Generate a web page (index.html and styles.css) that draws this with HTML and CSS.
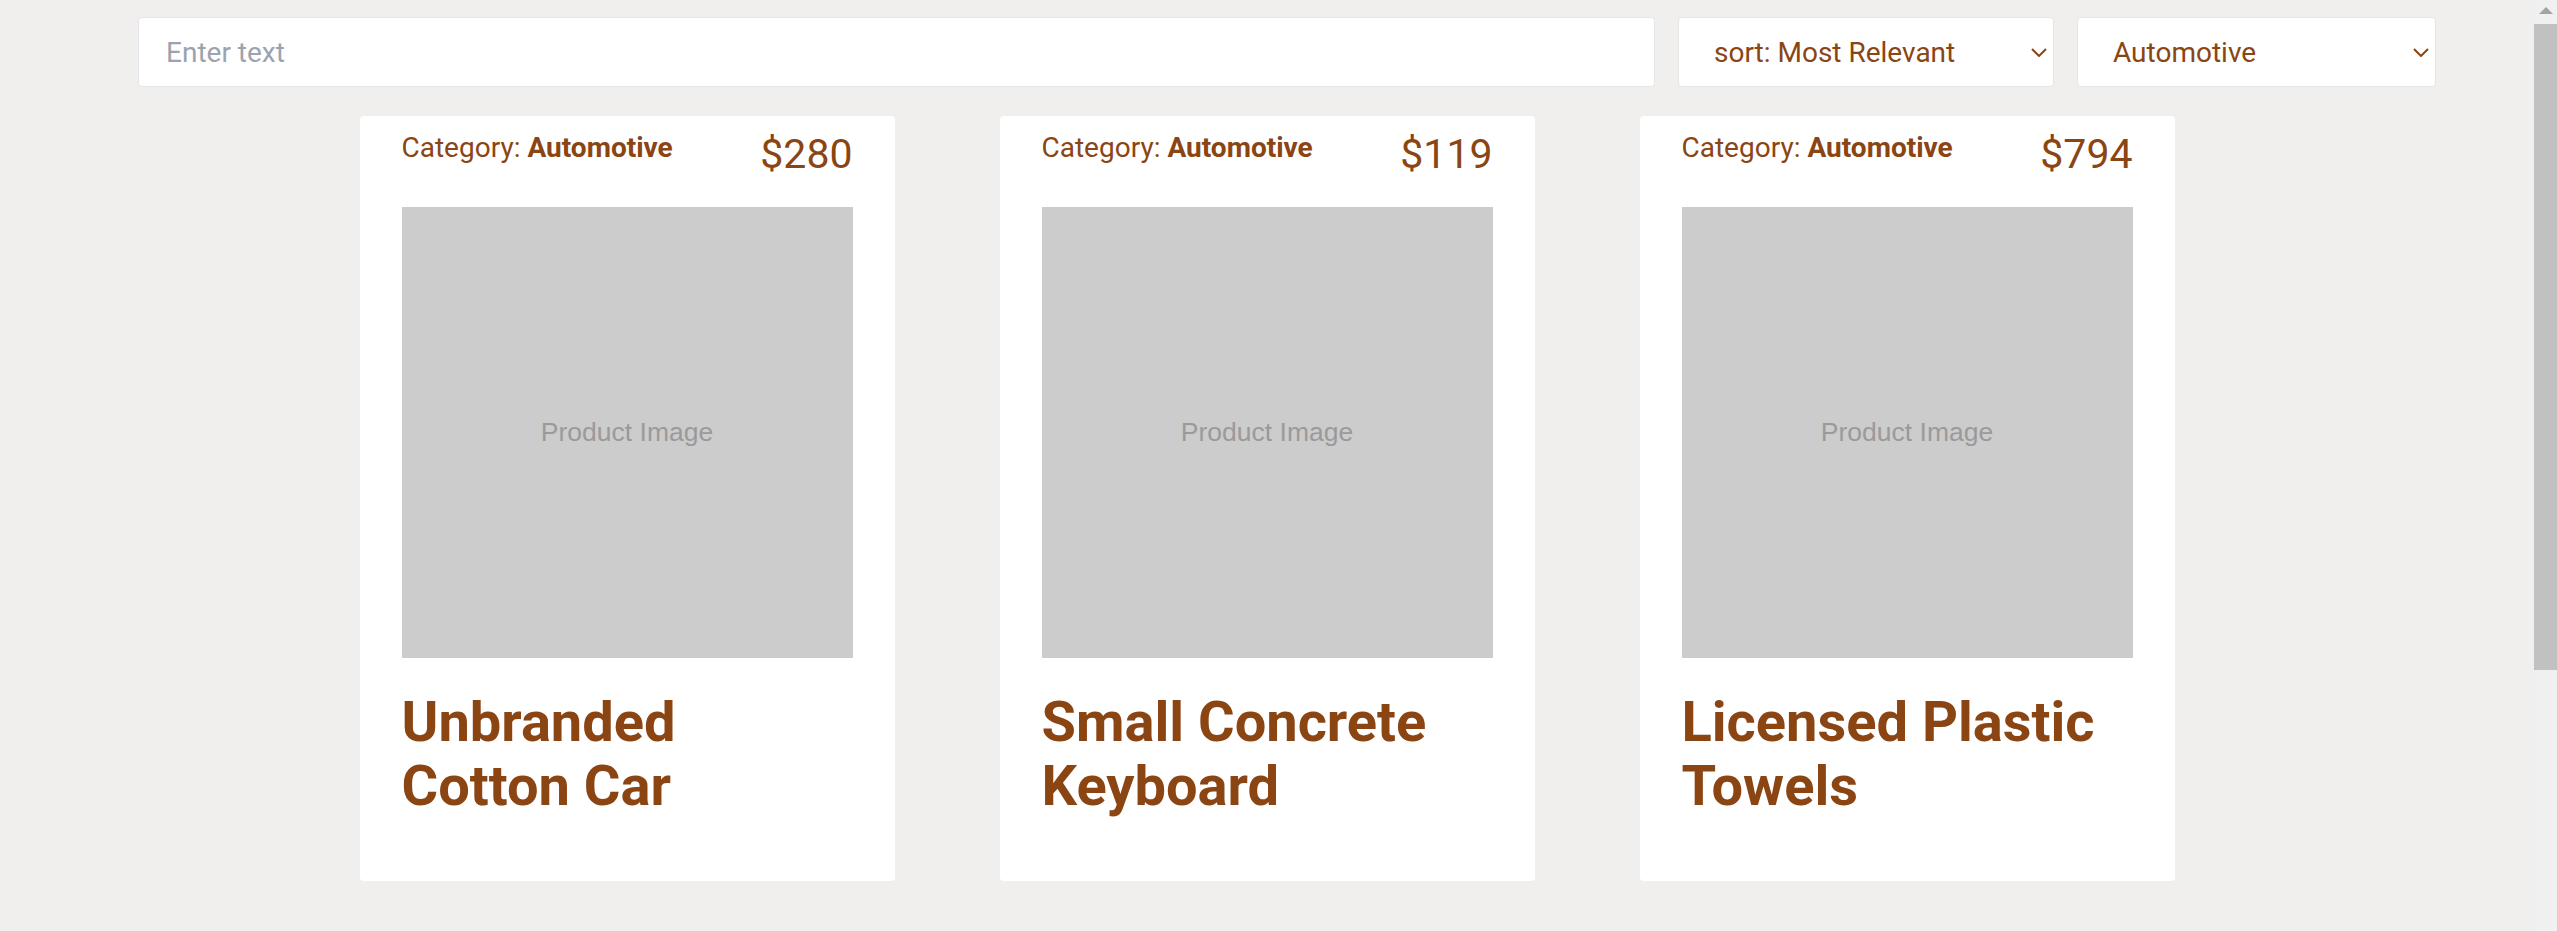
FILE: index.html
```html
<!DOCTYPE html>
<html lang="en">
<head>
<meta charset="utf-8">
<title>Products</title>
<link rel="stylesheet" href="styles.css">
</head>
<body>
<div class="page">
  <div class="toolbar">
    <input class="search" type="text" placeholder="Enter text">
    <div class="select-wrap sort">
      <select class="select">
        <option>sort: Most Relevant</option>
      </select>
      <svg class="chev" width="16" height="9" viewBox="0 0 16 9"><polyline points="1,1 8,8 15,1" fill="none" stroke="#8b4513" stroke-width="2"/></svg>
    </div>
    <div class="select-wrap cat">
      <select class="select">
        <option>Automotive</option>
      </select>
      <svg class="chev" width="16" height="9" viewBox="0 0 16 9"><polyline points="1,1 8,8 15,1" fill="none" stroke="#8b4513" stroke-width="2"/></svg>
    </div>
  </div>

  <div class="grid">
    <div class="card">
      <div class="card-head">
        <div class="category">Category: <b>Automotive</b></div>
        <div class="price">$280</div>
      </div>
      <div class="image">Product Image</div>
      <h2 class="title">Unbranded Cotton Car</h2>
    </div>
    <div class="card">
      <div class="card-head">
        <div class="category">Category: <b>Automotive</b></div>
        <div class="price">$119</div>
      </div>
      <div class="image">Product Image</div>
      <h2 class="title">Small Concrete Keyboard</h2>
    </div>
    <div class="card">
      <div class="card-head">
        <div class="category">Category: <b>Automotive</b></div>
        <div class="price">$794</div>
      </div>
      <div class="image">Product Image</div>
      <h2 class="title">Licensed Plastic Towels</h2>
    </div>
  </div>
</div>

<div class="scrollbar" aria-hidden="true">
  <div class="sb-btn sb-up"></div>
  <div class="sb-track"><div class="sb-thumb"></div></div>
</div>
</body>
</html>
```

FILE: styles.css
```css
html {
  background: #f0efed;
}
body {
  margin: 0;
  font-family: Roboto, "Noto Sans", sans-serif;
  color: #8b4513;
  background: #f0efed;
}

.page {
  margin-right: 23px;
  padding-bottom: 40px;
}

/* window scrollbar */
.scrollbar {
  position: fixed;
  top: 0;
  right: 0;
  bottom: 0;
  width: 23px;
  background: #f0f0f0;
  display: flex;
  flex-direction: column;
}
.sb-btn {
  height: 24px;
  flex: none;
  position: relative;
}
.sb-up::after {
  content: "";
  position: absolute;
  left: 5px;
  top: 7px;
  width: 0;
  height: 0;
  border-left: 7px solid transparent;
  border-right: 7px solid transparent;
  border-bottom: 7px solid #a3a3a3;
}
.sb-track {
  flex: 1;
}
.sb-thumb {
  height: 646px;
  background: #c1c1c1;
}

.toolbar {
  display: flex;
  gap: 23px;
  padding: 17px 98px 0 138px;
}
.search,
.select {
  box-sizing: border-box;
  height: 70px;
  border: 1px solid #e3e5e9;
  border-radius: 4px;
  background: #fff;
  font-family: Roboto, "Noto Sans", sans-serif;
  font-size: 28px;
  color: #8b4513;
  outline: none;
}
.search {
  flex: 1;
  padding: 0 0 0 27px;
}
.search::placeholder {
  color: #9ca3af;
}
.select-wrap {
  position: relative;
}
.select-wrap.sort {
  width: 376px;
}
.select-wrap.cat {
  width: 359px;
}
.select {
  display: block;
  width: 100%;
  appearance: none;
  -webkit-appearance: none;
  padding: 0 0 0 35px;
}
.chev {
  position: absolute;
  right: 7px;
  top: 31px;
  pointer-events: none;
}

.grid {
  display: grid;
  grid-template-columns: repeat(3, 535px);
  column-gap: 105px;
  justify-content: center;
  margin-top: 29px;
}
.card {
  background: #fff;
  border-radius: 4px;
  padding: 14px 42px 63px;
}
.card-head {
  display: flex;
  justify-content: space-between;
  align-items: flex-start;
}
.category {
  font-size: 28px;
  line-height: 36px;
}
.category b {
  font-weight: 700;
}
.price {
  font-size: 41px;
  line-height: 48px;
}
.image {
  margin-top: 29px;
  height: 451px;
  background: #cccccc;
  display: flex;
  align-items: center;
  justify-content: center;
  font-family: "Liberation Sans", Arial, sans-serif;
  font-size: 26.5px;
  color: #9a9a9a;
}
.title {
  margin: 32px 0 0;
  font-size: 56px;
  line-height: 64px;
  font-weight: 700;
}
```
